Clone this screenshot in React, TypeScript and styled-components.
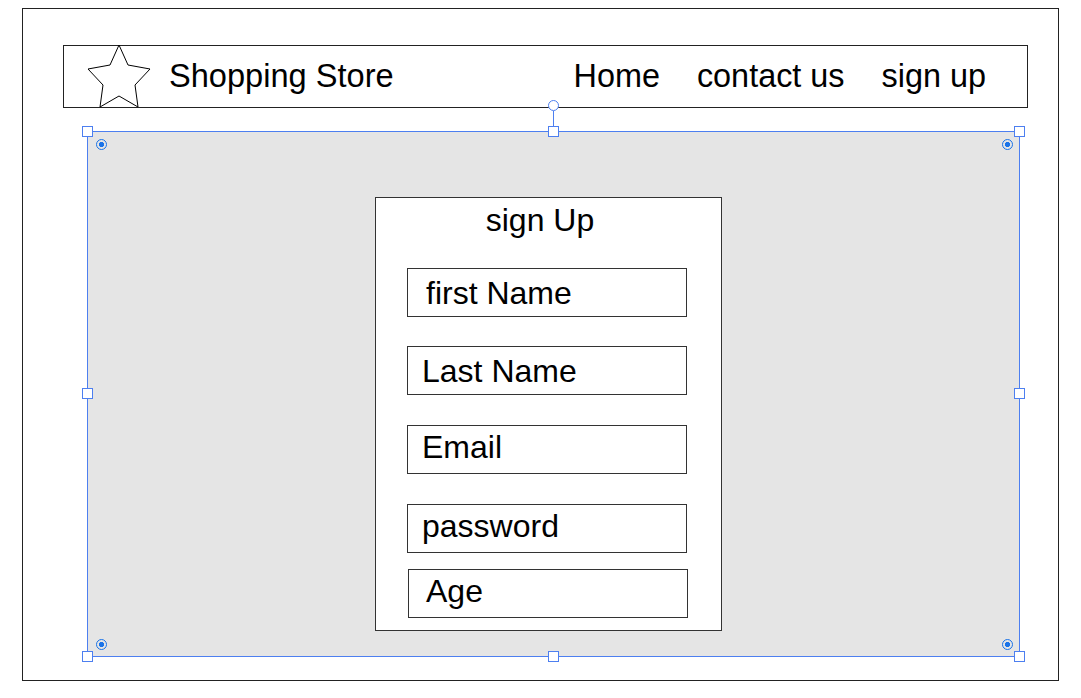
import React from 'react';
import styled, { createGlobalStyle } from 'styled-components';

const GlobalStyle = createGlobalStyle`
  html, body {
    margin: 0;
    padding: 0;
    background: #ffffff;
  }
  body {
    font-family: "Liberation Sans", Arial, sans-serif;
    color: #000;
  }
`;

const Frame = styled.div`
  box-sizing: border-box;
  margin: 8px 0 0 22px;
  width: 1037px;
  height: 673px;
  border: 1px solid #222;
  padding: 36px 0 0 40px;
`;

const Header = styled.header`
  box-sizing: border-box;
  width: 965px;
  height: 63px;
  border: 1px solid #222;
  display: flex;
  align-items: center;
  padding: 0 41px 0 24px;
`;

const StarIcon = styled.svg`
  flex: 0 0 auto;
  width: 63px;
  height: 63px;
  margin: -1px 0;
  overflow: visible;
`;

const Brand = styled.span`
  font-size: 32.6px;
  line-height: 1;
  margin-left: 18px;
`;

const Nav = styled.nav`
  margin-left: auto;
  display: flex;
  gap: 37px;
`;

const NavLink = styled.a`
  font-size: 32.4px;
  line-height: 1;
  color: #000;
  text-decoration: none;
`;

const Canvas = styled.section`
  position: relative;
  box-sizing: border-box;
  width: 933px;
  height: 526px;
  margin: 23px 0 0 24px;
  background: #e5e5e5;
  border: 1px solid #4d7ff0;
  padding: 65px 0 0 287px;
`;

const Handle = styled.span<{ $x: number; $y: number }>`
  position: absolute;
  left: ${(p) => p.$x}px;
  top: ${(p) => p.$y}px;
  width: 9px;
  height: 9px;
  background: #fff;
  border: 1px solid #4d7ff0;
`;

const RotateStem = styled.span`
  position: absolute;
  left: 465px;
  top: -21px;
  width: 1px;
  height: 15px;
  background: #4d7ff0;
`;

const RotateKnob = styled.span`
  position: absolute;
  left: 460px;
  top: -32px;
  width: 9px;
  height: 9px;
  border-radius: 50%;
  background: #fff;
  border: 1px solid #4d7ff0;
`;

const Marker = styled.span<{ $x: number; $y: number }>`
  position: absolute;
  left: ${(p) => p.$x}px;
  top: ${(p) => p.$y}px;
  box-sizing: border-box;
  width: 11px;
  height: 11px;
  border-radius: 50%;
  border: 1.5px solid #1a73e8;
  background: radial-gradient(circle, #1a73e8 0 2.4px, transparent 2.9px);
`;

const Card = styled.form`
  box-sizing: border-box;
  width: 347px;
  background: #fff;
  border: 1px solid #333;
  padding: 6px 0 12px 31px;
  display: flex;
  flex-direction: column;
`;

const Title = styled.h2`
  margin: 0;
  font-size: 32px;
  font-weight: normal;
  line-height: 32px;
  height: 32px;
  text-align: center;
  padding-right: 48px;
`;

const Field = styled.div<{ $top: number; $indent: number; $pad: number; $lift?: number }>`
  box-sizing: border-box;
  width: 280px;
  height: 49px;
  margin-top: ${(p) => p.$top}px;
  margin-left: ${(p) => p.$indent}px;
  border: 1px solid #333;
  background: #fff;
  display: flex;
  align-items: center;
  padding-left: ${(p) => p.$pad}px;
  padding-bottom: ${(p) => (p.$lift ?? 0) * 2}px;
  font-size: 32px;
  line-height: 1;
`;

const fields = [
  { label: 'first Name', top: 32, indent: 0, pad: 18 },
  { label: 'Last Name', top: 29, indent: 0, pad: 14 },
  { label: 'Email', top: 30, indent: 0, pad: 14, lift: 3 },
  { label: 'password', top: 30, indent: 0, pad: 14, lift: 3 },
  { label: 'Age', top: 16, indent: 1, pad: 17, lift: 3 },
];

// positions relative to the canvas padding box
const handles = [
  [-6, -6],
  [460, -6],
  [926, -6],
  [-6, 256],
  [926, 256],
  [-6, 519],
  [460, 519],
  [926, 519],
];

const markers = [
  [8, 7],
  [914, 7],
  [8, 507],
  [914, 507],
];

export default function App() {
  return (
    <>
      <GlobalStyle />
      <Frame>
        <Header>
          <StarIcon viewBox="0 0 63 63">
            <polygon
              points="31,0 40,20 62,24 47,40 50,62 31,51 12,62 15,40 0,24 22,20"
              fill="none"
              stroke="#000"
              strokeWidth="1"
              strokeLinejoin="miter"
            />
          </StarIcon>
          <Brand>Shopping Store</Brand>
          <Nav>
            <NavLink>Home</NavLink>
            <NavLink>contact us</NavLink>
            <NavLink>sign up</NavLink>
          </Nav>
        </Header>
        <Canvas>
          <Card>
            <Title>sign Up</Title>
            {fields.map((f) => (
              <Field key={f.label} $top={f.top} $indent={f.indent} $pad={f.pad} $lift={f.lift}>
                {f.label}
              </Field>
            ))}
          </Card>
          <RotateStem />
          <RotateKnob />
          {handles.map(([x, y]) => (
            <Handle key={`${x}-${y}`} $x={x} $y={y} />
          ))}
          {markers.map(([x, y]) => (
            <Marker key={`${x}-${y}`} $x={x} $y={y} />
          ))}
        </Canvas>
      </Frame>
    </>
  );
}
